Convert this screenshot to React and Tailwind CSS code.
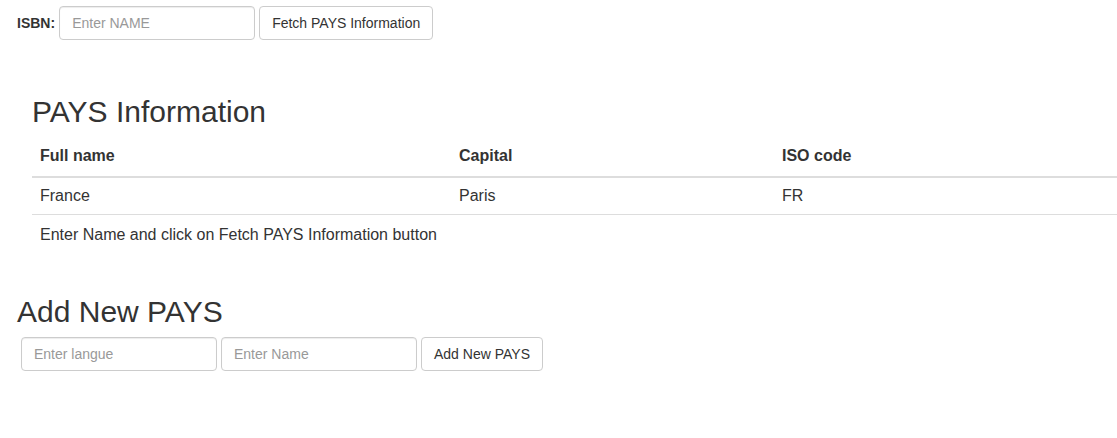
import React, { useState } from "react";

const inputCls =
  "h-[34px] w-[196px] px-[12px] border border-[#ccc] rounded-[4px] text-[14px] text-[#555] placeholder:text-[#999] bg-white shadow-[inset_0_1px_1px_rgba(0,0,0,0.075)] outline-none";
const btnCls =
  "h-[34px] px-[12px] border border-[#ccc] rounded-[4px] bg-white text-[14px] text-[#333] leading-[20px]";

const App = () => {
  const [name, setName] = useState("");
  const [langue, setLangue] = useState("");
  const [newName, setNewName] = useState("");

  const pays = [{ fullName: "France", capital: "Paris", iso: "FR" }];

  return (
    <div className="min-h-screen bg-white text-[#333] text-[14px] leading-[20px] font-['Liberation_Sans',Arial,sans-serif]">
      {/* fetch form */}
      <div className="flex items-center gap-[4px] pl-[17px] pt-[6px]">
        <label className="font-bold">ISBN:</label>
        <input
          className={inputCls}
          placeholder="Enter NAME"
          value={name}
          onChange={(e) => setName(e.target.value)}
        />
        <button className={btnCls}>Fetch PAYS Information</button>
      </div>

      <div className="pl-[32px] text-[16px] leading-[20px]">
        <h2 className="text-[30px] leading-[33px] font-normal mt-[55px] mb-[10px]">PAYS Information</h2>
        <table className="w-full border-collapse text-left">
          <thead>
            <tr className="border-b-2 border-[#ddd]">
              <th className="w-[419px] px-[8px] pt-[8px] pb-[10px] font-bold">Full name</th>
              <th className="w-[323px] px-[8px] pt-[8px] pb-[10px] font-bold">Capital</th>
              <th className="px-[8px] pt-[8px] pb-[10px] font-bold">ISO code</th>
            </tr>
          </thead>
          <tbody>
            {pays.map((p, i) => (
              <tr key={i} className="border-b border-[#ddd]">
                <td className="px-[8px] py-[8px]">{p.fullName}</td>
                <td className="px-[8px] py-[8px]">{p.capital}</td>
                <td className="px-[8px] py-[8px]">{p.iso}</td>
              </tr>
            ))}
          </tbody>
        </table>
        <div className="pl-[8px] pt-[10px]">Enter Name and click on Fetch PAYS Information button</div>
      </div>

      {/* add form */}
      <div className="pl-[17px]">
        <h2 className="text-[30px] leading-[33px] font-normal mt-[50px] mb-[9px]">Add New PAYS</h2>
        <div className="flex items-center gap-[4px] pl-[4px]">
          <input
            className={inputCls}
            placeholder="Enter langue"
            value={langue}
            onChange={(e) => setLangue(e.target.value)}
          />
          <input
            className={inputCls}
            placeholder="Enter Name"
            value={newName}
            onChange={(e) => setNewName(e.target.value)}
          />
          <button className={btnCls}>Add New PAYS</button>
        </div>
      </div>
    </div>
  );
};

export default App;
